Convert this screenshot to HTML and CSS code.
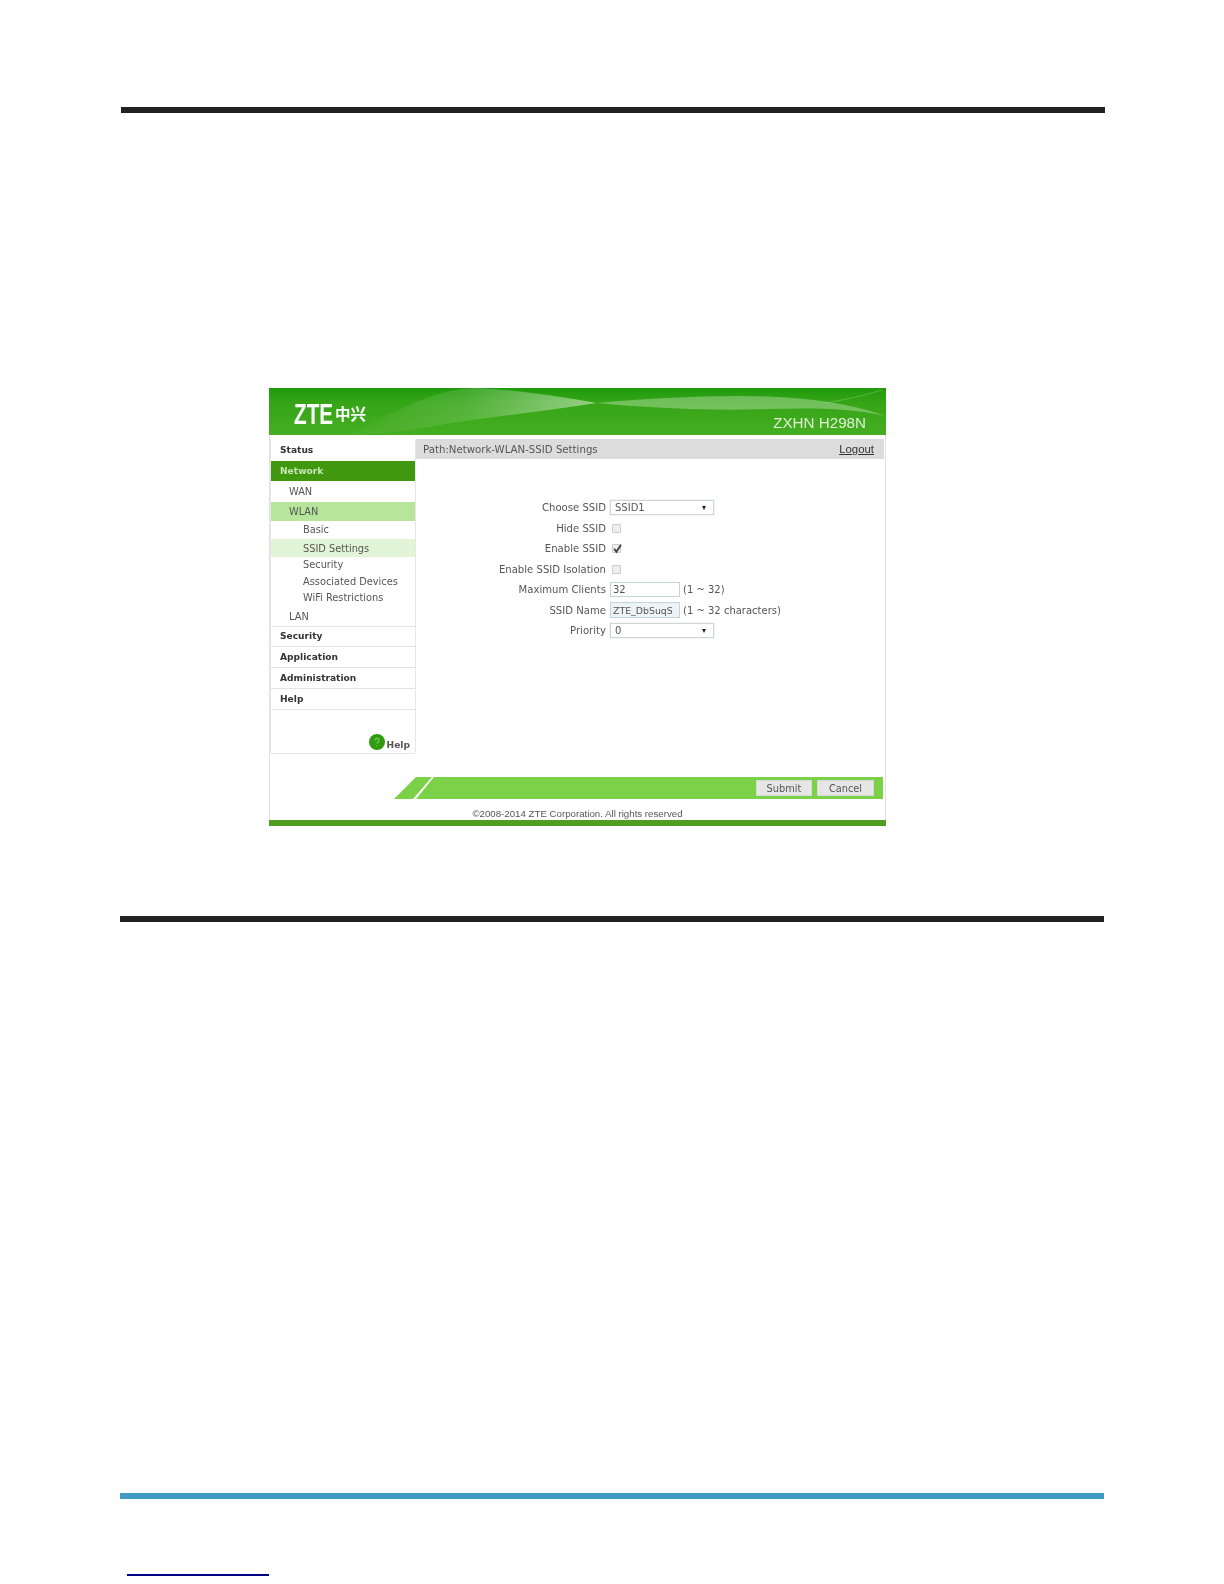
FILE: index.html
```html
<!DOCTYPE html>
<html lang="en">
<head>
<meta charset="utf-8">
<title>ZXHN H298N SSID Settings</title>
<link rel="stylesheet" href="styles.css">
</head>
<body>
<div class="page">
  <div class="rule rule-top"></div>
  <div class="shot">
    <header class="banner">
      <svg class="waves" viewBox="0 0 616 47" preserveAspectRatio="none" aria-hidden="true">
        <defs>
          <linearGradient id="lens" x1="0" x2="1" y1="0" y2="0">
            <stop offset="0" stop-color="#fff" stop-opacity="0"/>
            <stop offset=".5" stop-color="#fff" stop-opacity=".14"/>
            <stop offset="1" stop-color="#fff" stop-opacity=".48"/>
          </linearGradient>
        </defs>
        <path d="M207 0 C250 2 295 9 327 15 C270 24 210 30 165 38 C130 44 100 47 70 47 C100 44 150 0 207 0 Z" fill="url(#lens)"/>
        <path d="M327 15 C370 11 420 8 470 8 C530 8 580 15 616 28 C580 20 540 20 500 21 C440 23 380 20 327 15 Z" fill="#fff" opacity=".3"/>
        <path d="M555 15 C575 12 595 7 612 2" fill="none" stroke="#fff" stroke-width="1" opacity=".2"/>
      </svg>
      <div class="logo"><span class="logo-zte">ZTE</span><span class="logo-cn">中兴</span></div>
      <div class="model">ZXHN H298N</div>
    </header>
    <div class="content">
      <nav class="side">
        <div class="m m-status">Status</div>
        <div class="m m-active">Network</div>
        <div class="s s-wan">WAN</div>
        <div class="s s-wlan">WLAN</div>
        <div class="t t-basic">Basic</div>
        <div class="t t-current">SSID Settings</div>
        <div class="t t-short">Security</div>
        <div class="t t-short">Associated Devices</div>
        <div class="t t-short">WiFi Restrictions</div>
        <div class="s s-lan">LAN</div>
        <div class="m">Security</div>
        <div class="m">Application</div>
        <div class="m">Administration</div>
        <div class="m">Help</div>
        <div class="side-help">
          <svg class="help-icon" viewBox="0 0 16 16" aria-hidden="true"><circle cx="8" cy="8" r="8" fill="#2f9a12"/><path d="M6.2 6.2a1.9 1.9 0 1 1 2.8 1.7c-.7.4-1 .8-1 1.5M8 11.3v1" fill="none" stroke="#7fcf5f" stroke-width="1.2"/></svg>
          <span class="help-text">Help</span>
        </div>
      </nav>
      <main class="main">
        <div class="path"><span>Path:Network-WLAN-SSID Settings</span><span class="logout">Logout</span></div>
        <div class="form">
          <div class="label">Choose SSID</div>
          <div class="ctl"><div class="select"><span>SSID1</span><span class="arrow"></span></div></div>
          <div class="label">Hide SSID</div>
          <div class="ctl"><span class="check"></span></div>
          <div class="label">Enable SSID</div>
          <div class="ctl"><span class="check"><svg viewBox="0 0 10 10" aria-hidden="true"><path d="M2 5.2 4 8 8.2 1.6" fill="none" stroke="#444" stroke-width="1.7"/></svg></span></div>
          <div class="label">Enable SSID Isolation</div>
          <div class="ctl"><span class="check"></span></div>
          <div class="label">Maximum Clients</div>
          <div class="ctl"><span class="input">32</span><span class="hint">(1 ~ 32)</span></div>
          <div class="label">SSID Name</div>
          <div class="ctl"><span class="input input-filled">ZTE_DbSuqS</span><span class="hint">(1 ~ 32 characters)</span></div>
          <div class="label">Priority</div>
          <div class="ctl"><div class="select"><span>0</span><span class="arrow"></span></div></div>
        </div>
      </main>
    </div>
    <div class="bar">
      <span class="btn">Submit</span>
      <span class="btn">Cancel</span>
    </div>
    <div class="copy">©2008-2014 ZTE Corporation. All rights reserved</div>
    <div class="base"></div>
  </div>
  <div class="rule rule-mid"></div>
  <div class="rule rule-blue"></div>
  <a class="link-line" href="#" aria-label="link"></a>
</div>
</body>
</html>
```

FILE: styles.css
```css
* { box-sizing: border-box; }
html, body { margin: 0; padding: 0; background: #fff; }
.page { width: 1224px; height: 1584px; padding-top: 107px; overflow: hidden; }

.rule { height: 6px; width: 984px; background: #222; }
.rule-top { margin-left: 121px; }
.rule-mid { margin: 90px 0 0 120px; }
.rule-blue { margin: 571px 0 0 120px; background: #3f9ac6; }
.link-line { display: block; width: 142px; height: 2px; margin: 75px 0 0 127px; background: #00008b; }

.shot {
  width: 617px; height: 438px; margin: 275px 0 0 269px;
  display: flex; flex-direction: column;
  background: #fff;
  border-left: 1px solid #e2e2e2; border-right: 1px solid #e2e2e2;
  font-family: "DejaVu Sans", sans-serif; font-size: 9.8px; color: #555;
  filter: blur(.7px);
}

.banner {
  position: relative; height: 47px; flex: none; margin: 0 -1px; overflow: hidden;
  display: flex; justify-content: space-between; align-items: center;
  padding: 0 20px 0 25px;
  background: linear-gradient(180deg, #1f9a0c 0, #35a516 30%, #45ae22 100%);
  color: #fff; font-family: "Liberation Sans", sans-serif;
}
.waves { position: absolute; inset: 0; width: 100%; height: 100%; }
.logo { position: relative; display: flex; align-items: center; margin-top: 4px; }
.logo-zte { width: 41px; font-size: 30px; font-weight: 700; transform: scaleX(.69); transform-origin: left center; white-space: nowrap; line-height: 1; }
.logo-cn { font-family: "Noto Sans CJK SC", sans-serif; font-weight: 700; font-size: 15.5px; line-height: 1; }
.model { position: relative; font-size: 15.2px; margin-top: 22px; color: #dff0d5; }

.content { display: flex; gap: 1px; margin-top: 4px; padding: 0 1px; flex: none; }

.side {
  width: 144px; height: 314px; flex: none;
  display: flex; flex-direction: column;
  box-shadow: 1px 0 0 #e6e6e6, -1px 0 0 #e6e6e6, 0 1px 0 #e6e6e6;
}
.m { height: 20.8px; flex: none; padding-left: 9px; display: flex; align-items: center; font-weight: 700; color: #333; border-bottom: 1px solid #e3e3e3; font-size: 9.1px; }
.m-status { height: 22px; padding-bottom: 1px; border-bottom: 0; }
.m-active { height: 20px; background: #3f980e; color: #c8e6b8; border-bottom: 0; }
.s { height: 20px; flex: none; padding-left: 18px; display: flex; align-items: center; }
.s-wan { height: 21px; }
.s-wlan { height: 19px; background: #b7e59b; }
.s-lan { height: 20px; border-bottom: 1px solid #e3e3e3; }
.t { height: 17px; flex: none; padding-left: 32px; display: flex; align-items: center; }
.t-basic { height: 18px; padding-bottom: 2px; }
.t-current { background: #e2f5d6; height: 18px; }
.t-short { height: 16.5px; padding-bottom: 1px; }
.side-help { margin-top: auto; display: flex; justify-content: flex-end; align-items: flex-start; padding: 0 5px 3px 0; }
.help-icon { width: 16px; height: 16px; flex: none; }
.help-text { font-weight: 700; margin: 6px 0 0 2px; color: #555; font-size: 9.1px; }

.main { flex: 1; min-width: 0; }
.path { height: 20px; padding: 0 10px 0 7px; background: #dcdcdc; display: flex; justify-content: space-between; align-items: center; color: #555; font-size: 10.2px; }
.logout { text-decoration: underline; color: #333; font-family: "Liberation Sans", sans-serif; font-size: 11.4px; }
.form {
  display: grid; grid-template-columns: 189px 1fr; column-gap: 5px;
  grid-auto-rows: 20.5px; padding-top: 38.5px; font-size: 10px;
}
.label { display: flex; align-items: center; justify-content: flex-end; white-space: nowrap; font-size: 10.1px; margin-right: -1px; }
.ctl { display: flex; align-items: center; }
.select {
  width: 104px; height: 15px; padding: 0 7px 0 4px;
  display: flex; align-items: center; justify-content: space-between;
  background: #fff; border: 1px solid #cfd6d6; box-shadow: 0 0 1px #bbb;
}
.arrow { width: 0; height: 0; border-left: 2.5px solid transparent; border-right: 2.5px solid transparent; border-top: 4px solid #222; }
.check { display: block; width: 9px; height: 9px; margin-left: 2px; background: #eee; border: 1px solid #ccc; border-radius: 1px; position: relative; }
.check svg { position: absolute; left: -1px; top: -2px; width: 11px; height: 11px; }
.input { width: 70px; height: 15px; padding-left: 2px; display: flex; align-items: center; background: #fff; border: 1px solid #c4d4dc; overflow: hidden; white-space: nowrap; }
.input-filled { background: #eef3f6; height: 16px; font-size: 9.4px; }
.hint { margin-left: 3px; white-space: nowrap; }

.bar {
  height: 22px; width: 489px; margin: 24px 0 0 124px; flex: none;
  display: flex; justify-content: flex-end; align-items: center; gap: 5px;
  padding-right: 9px;
  background: #7bd147;
  clip-path: polygon(22px 0, 38px 0, 19px 100%, 22px 100%, 40px 0, 100% 0, 100% 100%, 0 100%);
}
.btn { width: 56px; height: 16px; display: flex; align-items: center; justify-content: center; background: #e6e6e6; border: 1px solid #d8d8d8; color: #555; }
.btn + .btn { width: 57px; }
.copy { height: 21px; flex: none; display: flex; align-items: center; justify-content: center; padding-top: 7px; font-family: "Liberation Sans", sans-serif; font-size: 9.7px; color: #555; }
.base { height: 6px; flex: none; margin: 0 -1px; background: #4f9e22; }
```
